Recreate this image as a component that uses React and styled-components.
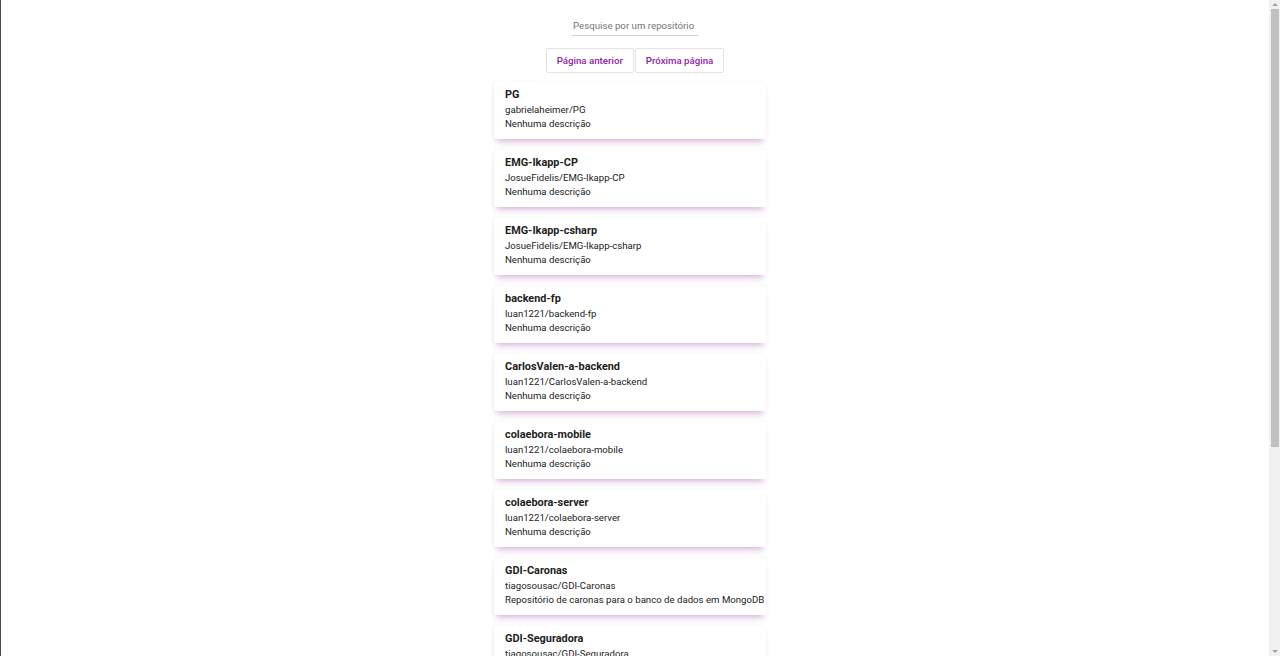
import React, { useState } from 'react';
import styled, { createGlobalStyle } from 'styled-components';

const GlobalStyle = createGlobalStyle`
  html, body {
    margin: 0;
    padding: 0;
    background: #fff;
    font-family: Roboto, "Liberation Sans", sans-serif;
    color: #212121;
  }
`;

const Page = styled.div`
  min-height: 100vh;
  border-left: 1px solid #4a4a4a;
  padding: 17px 11px 0 0;
  display: flex;
  flex-direction: column;
  align-items: center;
  box-sizing: border-box;
`;

// browser scrollbar as seen in the screenshot
const ScrollTrack = styled.div`
  position: fixed;
  top: 0;
  right: 0;
  width: 11px;
  height: 100vh;
  background: #f1f1f1;
  display: flex;
  flex-direction: column;
  align-items: center;
`;

const ScrollArrow = styled.div`
  width: 0;
  height: 0;
  margin: 3px 0;
  border-left: 3px solid transparent;
  border-right: 3px solid transparent;
  ${(p) => (p.down ? 'border-top: 3px solid #a3a3a3;' : 'border-bottom: 3px solid #a3a3a3;')}
`;

const ScrollThumb = styled.div`
  width: 8px;
  height: 438px;
  margin-top: 0;
  background: #c1c1c1;
`;

const Spacer = styled.div`
  flex: 1;
`;

const SearchInput = styled.input`
  width: 125px;
  border: none;
  border-bottom: 1px solid #cfcfcf;
  outline: none;
  font-family: inherit;
  font-size: 9.7px;
  color: #555;
  padding: 3px 0 4px 1px;
  background: transparent;
  &::placeholder {
    color: #757575;
  }
`;

const Pager = styled.div`
  display: flex;
  gap: 1px;
  margin-top: 12px;
`;

const PageButton = styled.button`
  height: 25px;
  padding: 0 10px;
  background: #fff;
  border: 1px solid #e2e2e2;
  border-radius: 2px;
  color: #8e24aa;
  font-family: inherit;
  font-size: 9.7px;
  font-weight: 500;
  cursor: pointer;
`;

const List = styled.ul`
  list-style: none;
  margin: 9px 0 0;
  padding: 0 10px 0 0;
  width: 282px;
  box-sizing: border-box;
`;

const Card = styled.li`
  background: #fff;
  padding: 4px 11px 8px;
  margin-bottom: 11px;
  box-shadow: 0 6px 6px -3px rgba(150, 40, 160, 0.3), -1px 0 3px rgba(0, 0, 0, 0.05);
  white-space: nowrap;
`;

const Title = styled.div`
  font-size: 10.9px;
  font-weight: 700;
  line-height: 17px;
  color: #1e1e1e;
`;

const Line = styled.div`
  font-size: 9.65px;
  line-height: 14px;
  color: #222;
`;

const repos = [
  { name: 'PG', full: 'gabrielaheimer/PG', desc: null },
  { name: 'EMG-Ikapp-CP', full: 'JosueFidelis/EMG-Ikapp-CP', desc: null },
  { name: 'EMG-Ikapp-csharp', full: 'JosueFidelis/EMG-Ikapp-csharp', desc: null },
  { name: 'backend-fp', full: 'luan1221/backend-fp', desc: null },
  { name: 'CarlosValen-a-backend', full: 'luan1221/CarlosValen-a-backend', desc: null },
  { name: 'colaebora-mobile', full: 'luan1221/colaebora-mobile', desc: null },
  { name: 'colaebora-server', full: 'luan1221/colaebora-server', desc: null },
  { name: 'GDI-Caronas', full: 'tiagosousac/GDI-Caronas', desc: 'Repositório de caronas para o banco de dados em MongoDB' },
  { name: 'GDI-Seguradora', full: 'tiagosousac/GDI-Seguradora', desc: null },
  { name: 'GDI-Loja', full: 'tiagosousac/GDI-Loja', desc: null },
];

export default function App() {
  const [query, setQuery] = useState('');

  return (
    <>
      <GlobalStyle />
      <Page>
        <SearchInput
          placeholder="Pesquise por um repositório"
          value={query}
          onChange={(e) => setQuery(e.target.value)}
        />
        <Pager>
          <PageButton>Página anterior</PageButton>
          <PageButton>Próxima página</PageButton>
        </Pager>
        <List>
          {repos.map((r) => (
            <Card key={r.full}>
              <Title>{r.name}</Title>
              <Line>{r.full}</Line>
              <Line>{r.desc || 'Nenhuma descrição'}</Line>
            </Card>
          ))}
        </List>
      </Page>
      <ScrollTrack>
        <ScrollArrow />
        <ScrollThumb />
        <Spacer />
        <ScrollArrow down />
      </ScrollTrack>
    </>
  );
}
